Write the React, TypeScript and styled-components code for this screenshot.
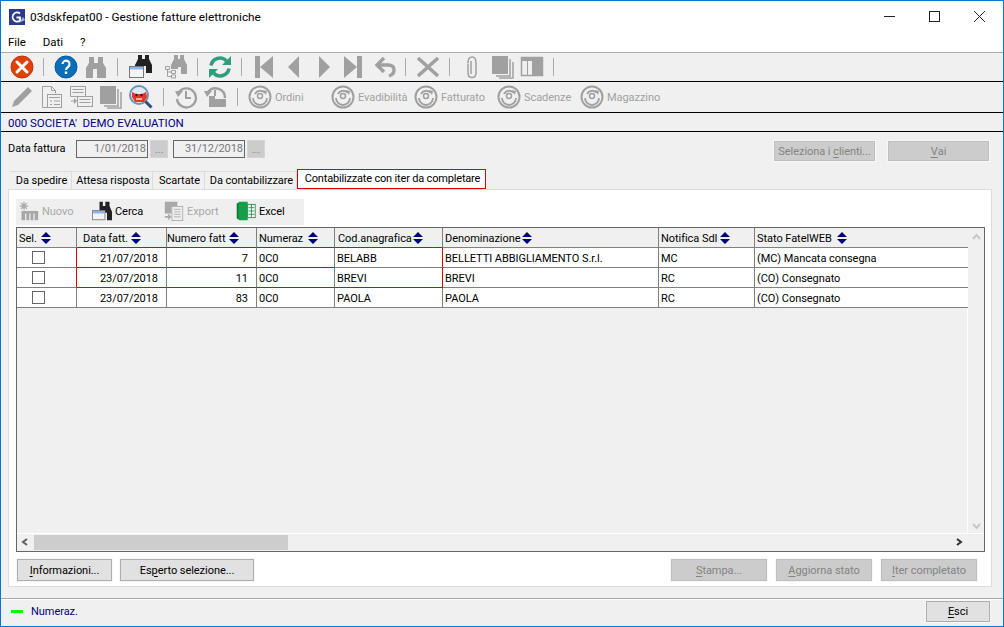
import styled, {createGlobalStyle} from "styled-components";
import type {ReactNode} from "react";

const GlobalStyle = createGlobalStyle`
  html, body {
    margin: 0;
    padding: 0;
    overflow: hidden;
  }
  * {
    box-sizing: border-box;
  }
`;

const Win = styled.div`
  width: 1004px;
  height: 627px;
  display: flex;
  flex-direction: column;
  background: #f0f0f0;
  border: 1px solid #0078d7;
  font-family: Roboto, "Liberation Sans", sans-serif;
  font-size: 11px;
  letter-spacing: -0.05px;
  color: #000;
`;

const TitleBar = styled.div`
  height: 31px;
  display: flex;
  align-items: center;
  background: #fff;
  padding: 0 1px 0 8px;
`;

const TitleText = styled.span`
  margin-left: 5px;
  flex: 1;
  font-size: 11.8px;
  letter-spacing: 0;
`;

const WinButton = styled.div`
  width: 45px;
  height: 31px;
  display: flex;
  align-items: center;
  justify-content: center;
`;

const MenuBar = styled.div`
  height: 20px;
  display: flex;
  align-items: center;
  gap: 17px;
  padding-left: 7px;
  background: #fff;
  font-size: 11.5px;
`;

const ToolBar = styled.div<{$h: number; $top?: string}>`
  height: ${props => props.$h}px;
  display: flex;
  align-items: center;
  padding-left: 9px;
  border-bottom: 1px solid #000;
  border-top: ${props => props.$top ?? "none"};
`;

const Tool = styled.div<{$gap: number}>`
  width: 24px;
  height: 24px;
  flex: none;
  margin-left: ${props => props.$gap}px;
  svg {
    display: block;
  }
`;

const Sep = styled.div<{$gap: number}>`
  width: 1px;
  height: 18px;
  flex: none;
  margin-left: ${props => props.$gap}px;
  background: #aaa;
`;

const ChartLink = styled.div`
  width: 83px;
  flex: none;
  display: flex;
  align-items: center;
  gap: 3px;
  color: #a0a0a0;
`;

const LinkGroup = styled.div`
  display: flex;
  margin-left: 10px;
`;

const Company = styled.div`
  height: 19px;
  display: flex;
  align-items: center;
  padding: 1px 0 0 7px;
  color: #000080;
  border-bottom: 1px solid #000;
  white-space: pre;
  font-size: 11.5px;
`;

const Body = styled.div`
  flex: 1;
  display: flex;
  flex-direction: column;
  padding: 0 11px 11px 7px;
`;

const FilterRow = styled.div`
  height: 37px;
  display: flex;
  align-items: flex-start;
  padding: 8px 3px 0 0;
`;

const FilterLabel = styled.span`
  width: 68px;
  line-height: 18px;
`;

const DateBox = styled.div<{$gap?: number}>`
  width: 72px;
  height: 18px;
  margin-left: ${props => props.$gap ?? 0}px;
  border: 1px solid #666;
  text-align: right;
  line-height: 16px;
  color: #777;
  padding-right: 1px;
`;

const DotsButton = styled.div`
  width: 18px;
  height: 18px;
  margin-left: 2px;
  background: #ccc;
  border: 1px solid #d4d4d4;
  color: #888;
  text-align: center;
  line-height: 18px;
`;

const Spacer = styled.div`
  flex: 1;
`;

const Button = styled.div<{$w: number; $h?: number; $disabled?: boolean; $gap?: number}>`
  width: ${props => props.$w}px;
  height: ${props => props.$h ?? 22}px;
  margin-left: ${props => props.$gap ?? 0}px;
  flex: none;
  display: flex;
  align-items: center;
  justify-content: center;
  background: ${props => props.$disabled ? "#cccccc" : "#e1e1e1"};
  border: 1px solid ${props => props.$disabled ? "#bfbfbf" : "#adadad"};
  color: ${props => props.$disabled ? "#838383" : "#000"};
  outline: 1px solid #f8f8f8;
  white-space: pre;

  u {
    text-underline-offset: 2px;
  }
`;

const FilterButton = styled(Button)`
  margin-top: 1px;
`;

const Tabs = styled.div`
  height: 20px;
  display: flex;
  align-items: flex-end;
  padding-left: 2px;
`;

const Tab = styled.div<{$w: number}>`
  width: ${props => props.$w}px;
  height: 18px;
  border: 1px solid #dcdcdc;
  border-bottom: none;
  border-left: none;
  display: flex;
  align-items: center;
  justify-content: center;
  padding-left: 2px;
  white-space: nowrap;
`;

const ActiveTab = styled.div`
  width: 189px;
  height: 20px;
  background: #fff;
  border: 1px solid #e00000;
  display: flex;
  align-items: center;
  justify-content: center;
  padding: 0 0 1px 2px;
  letter-spacing: -0.18px;
  white-space: nowrap;
`;

const Panel = styled.div`
  height: 398px;
  display: flex;
  flex-direction: column;
  background: #fff;
  border: 1px solid #dcdcdc;
  padding: 9px 7px 0 7px;
`;

const InnerBar = styled.div`
  width: 288px;
  height: 26px;
  display: flex;
  align-items: center;
  background: #efefef;
  padding: 0 0 2px 3px;
`;

const InnerItem = styled.div<{$w: number; $disabled?: boolean}>`
  width: ${props => props.$w}px;
  flex: none;
  display: flex;
  align-items: center;
  gap: 3px;
  color: ${props => props.$disabled ? "#a8a8a8" : "#000"};
`;

const Frame = styled.div`
  width: 969px;
  height: 325px;
  margin-top: 2px;
  display: flex;
  flex-direction: column;
  border: 1px solid #666;
  background: #f0f0f0;
`;

const FrameTop = styled.div`
  flex: 1;
  display: flex;
  border-bottom: 1px solid #fff;
`;

const Table = styled.div`
  width: 951px;
  display: grid;
  grid-template-columns: 60px 90px 90px 78px 108px 216px 96px 213px;
  grid-auto-rows: 20px;
  align-content: start;
  border-right: 1px solid #fff;
`;

const HeadCell = styled.div<{$pad: number; $redBottom?: boolean; $last?: boolean}>`
  display: flex;
  align-items: center;
  padding: 1px 0 0 ${props => props.$pad}px;
  background: #f0f0f0;
  border-bottom: 1px solid ${props => props.$redBottom ? "#e00000" : "#808080"};
  border-right: ${props => props.$last ? "none" : "1px solid #808080"};
  white-space: nowrap;
`;

const HeadLabel = styled.span<{$w: number}>`
  width: ${props => props.$w}px;
  flex: none;
`;

const Cell = styled.div<{$right?: boolean; $redBottom?: boolean; $redRight?: boolean; $last?: boolean}>`
  display: flex;
  align-items: center;
  justify-content: ${props => props.$right ? "flex-end" : "flex-start"};
  padding: ${props => props.$right ? "1px 8px 0 0" : "1px 0 0 2px"};
  background: #fff;
  border-bottom: 1px solid ${props => props.$redBottom ? "#e00000" : "#808080"};
  border-right: ${props => props.$last ? "none" : `1px solid ${props.$redRight ? "#e00000" : "#808080"}`};
  white-space: nowrap;
`;

const CheckCell = styled(Cell)`
  padding: 0 0 0 15px;
`;

const CheckBox = styled.div`
  width: 13px;
  height: 13px;
  background: #fff;
  border: 1px solid #666;
`;

const VScroll = styled.div`
  width: 16px;
  display: flex;
  flex-direction: column;
  justify-content: space-between;
  align-items: center;
  padding: 5px 0 3px;
`;

const HScroll = styled.div`
  height: 17px;
  display: flex;
  align-items: center;
  padding: 0 0 1px 4px;
`;

const Thumb = styled.div`
  width: 254px;
  height: 15px;
  margin-left: 4px;
  background: #cdcdcd;
`;

const ScrollEnd = styled.div`
  width: 21px;
  flex: none;
`;

const FooterEnd = styled.div`
  width: 7px;
  flex: none;
`;

const PanelFooter = styled.div`
  display: flex;
  align-items: center;
  height: 22px;
  margin-top: 7px;
  padding-left: 1px;
`;

const StatusBar = styled.div`
  height: 28px;
  display: flex;
  align-items: center;
  padding: 0 13px 2px 10px;
  border-top: 1px solid #a8a8a8;
  box-shadow: inset 0 1px 0 #fff;
`;

const GreenDash = styled.div`
  width: 12px;
  height: 3px;
  background: #00ff00;
`;

const StatusText = styled.span`
  margin-left: 8px;
  flex: 1;
  color: #000080;
`;

const G = "#a0a0a0";

const Svg = ({children, size = 24}: {children: ReactNode; size?: number}) =>
  <svg width={size} height={size} viewBox="0 0 24 24">{children}</svg>;

const Logo = () =>
  <svg width={16} height={16} viewBox="0 0 16 16">
    <rect width="16" height="16" fill="#2b3a8c"/>
    <path d="M11 4.500A4.500 4.500 0 1 0 11 11.500V8.500H7.500" fill="none" stroke="#fff" strokeWidth="1.800"/>
    <path d="M10 14l4-6 2 3z" fill="#9fb2e0"/>
  </svg>;

const CloseIcon = () => <Svg>
  <circle cx="12" cy="12" r="11" fill="#dd4208" stroke="#c0340a"/>
  <path d="M7 7l10 10M17 7L7 17" stroke="#fff" strokeWidth="3" strokeLinecap="round"/>
</Svg>;

const HelpIcon = () => <Svg>
  <circle cx="12" cy="12" r="11" fill="#0a6fb8" stroke="#075a99"/>
  <path d="M8.500 9a3.500 3.500 0 1 1 5.500 3c-1.300 1-2 1.500-2 3" fill="none" stroke="#fff" strokeWidth="2.200"/>
  <rect x="10.800" y="16.500" width="2.400" height="2.500" fill="#fff"/>
</Svg>;

const GrayBinoc = () => <Svg>
  <path fill={G} d="M5 2h5v6h4V2h5v6l3 5v10h-9v-9h-4v9H2V13l3-5z"/>
</Svg>;

const BlackBinoc = () => <Svg>
  <path fill="#222" d="M9 0h4v4h3V0h4v4l3 6v8h-6v-7h-3v3H6v-4l3-6z"/>
  <rect x="0.500" y="11.500" width="14" height="11" fill="#f4f4f4" stroke="#777"/>
  <rect x="1" y="12" width="13" height="2.500" fill="#8fb4e8"/>
</Svg>;

const TreeBinoc = () => <Svg>
  <path fill={G} d="M10 0h4v4h2V0h4v4l3 6v9h-6v-7h-3v2H7v-4l3-6z"/>
  <path fill="none" stroke={G} d="M1.500 11.500h4v3h-4zM7.500 15.500h4v3h-4zM7.500 20h4v3h-4zM3.500 14.500V21.500h4M3.500 17h4"/>
</Svg>;

const RefreshIcon = () => <Svg>
  <g fill="none" stroke="#2f9c7e" strokeWidth="3.600">
    <path d="M3 10.500A9 9 0 0 1 18.500 6"/>
    <path d="M21 13.500A9 9 0 0 1 5.500 18"/>
  </g>
  <path fill="#2f9c7e" d="M14 10h9V1zM10 14H1v9z"/>
</Svg>;

const First = () => <Svg><path fill={G} d="M2 1h5v22H2zM20 1v22L7 12z"/></Svg>;
const Prev = () => <Svg><path fill={G} d="M18 1v22L7 12z"/></Svg>;
const Next = () => <Svg><path fill={G} d="M6 1v22l11-11z"/></Svg>;
const Last = () => <Svg><path fill={G} d="M21 1h-5v22h5zM3 1v22l13-11z"/></Svg>;
const Undo = () => <Svg>
  <path fill="none" stroke={G} strokeWidth="3.400" d="M4 10h11c4 0 6 2 6 5s-2 5-5 6"/>
  <path fill="none" stroke={G} strokeWidth="3.400" d="M11 3L4 10l7 7"/>
</Svg>;
const Cross = () => <Svg><path stroke={G} strokeWidth="3.600" d="M2 3l20 18M22 3L2 21"/></Svg>;
const Clip = () => <Svg>
  <path fill="none" stroke={G} strokeWidth="1.500" d="M8 8c0-4 1.500-6 4-6s4 2 4 6v10c0 3-1.500 4.500-4 4.500S8 21 8 18V8.500M11 6v13"/>
</Svg>;
const Copies = () => <Svg>
  <rect x="1" y="1" width="16" height="18" fill={G}/>
  <path fill="none" stroke={G} strokeWidth="1.500" d="M19 4v17H5M22 7v16H8"/>
</Svg>;
const Columns = () => <Svg>
  <rect x="1.500" y="2.500" width="21" height="18" fill="none" stroke={G} strokeWidth="1.500"/>
  <rect x="12" y="2" width="11" height="19" fill={G}/>
  <rect x="1" y="2" width="22" height="4" fill={G}/>
  <path stroke={G} d="M7.500 6v14"/>
</Svg>;
const Pencil = () => <Svg>
  <path fill={G} d="M18 2l4 4L8 20l-6 2 2-6z"/>
</Svg>;
const DocForm = () => <Svg>
  <path fill="none" stroke={G} d="M3.500 1.500h9l4 4v3M3.500 1.500v21h5M12.500 1.500v4h4"/>
  <rect x="8.500" y="9.500" width="14" height="13" fill="#f0f0f0" stroke={G}/>
  <path stroke={G} d="M10 12.500h11M11 16h2M15 16h6M11 19.500h2M15 19.500h6"/>
</Svg>;
const DocSwap = () => <Svg>
  <path fill="none" stroke={G} d="M1.500 1.500h15v10h-15zM3.500 4.500h11M3.500 7.500h11"/>
  <rect x="8.500" y="11.500" width="15" height="10" fill="#f0f0f0" stroke={G}/>
  <path stroke={G} d="M10.500 14.500h11M10.500 17.500h11M2 16h5"/>
  <path fill={G} d="M5 13l3 3-3 3z"/>
</Svg>;
const Lens = () => <Svg>
  <circle cx="10" cy="10" r="9" fill="#dfe8f2" stroke="#6e93b8" strokeWidth="2"/>
  <path fill="#e23a1c" d="M3 7l4 2h6l4-2 1 5-3 5H6l-3-5z"/>
  <circle cx="7.500" cy="10" r="1.200" fill="#222"/>
  <circle cx="12.500" cy="10" r="1.200" fill="#222"/>
  <path d="M7 14h6" stroke="#fff" strokeWidth="1.300"/>
  <path d="M16.500 16.500l6 6" stroke="#2b4f7a" strokeWidth="3"/>
</Svg>;
const ClockBack = () => <Svg>
  <path fill="none" stroke={G} strokeWidth="2.400" d="M5 7a9.500 9.500 0 1 1-2 7"/>
  <path fill={G} d="M1 6h8l-5 6z"/>
  <path fill="none" stroke={G} strokeWidth="2" d="M12 6v7h5"/>
</Svg>;
const ClockFile = () => <Svg>
  <path fill="none" stroke={G} strokeWidth="2.400" d="M5 7a9.500 9.500 0 0 1 17 6"/>
  <path fill={G} d="M1 6h8l-5 6z"/>
  <path fill="none" stroke={G} strokeWidth="2" d="M12 5v6"/>
  <path fill={G} d="M6 11h6v3h11v8H6z"/>
</Svg>;
const Swirl = () => <Svg>
  <circle cx="12" cy="12" r="10.500" fill="none" stroke={G} strokeWidth="2"/>
  <path fill="none" stroke={G} strokeWidth="1.800" d="M5 13a7 7 0 0 0 14 0M7 9a6 6 0 0 1 10-1"/>
  <circle cx="12" cy="11" r="2.500" fill="none" stroke={G} strokeWidth="1.500"/>
  <path fill={G} d="M15 5l4 1-1 4z"/>
</Svg>;

const NuovoIcon = () => <Svg size={20}>
  <path stroke="#a8a8a8" strokeWidth="1.500" d="M6 1v10M1 6h10M2.500 2.500l7 7M9.500 2.500l-7 7"/>
  <rect x="3" y="12" width="20" height="11" fill="#a8a8a8"/>
  <path stroke="#efefef" strokeWidth="1.500" d="M8 15v8M13 15v8M18 15v8"/>
</Svg>;
const CercaIcon = () => <Svg size={20}>
  <path fill="#222" d="M9 1h4v5h3V1h5v5l3 7v10h-6v-9h-3.500v1H9V9z"/>
  <rect x="0.500" y="11.500" width="15" height="11" fill="#f4f4f4" stroke="#777"/>
  <rect x="1" y="12" width="14" height="3" fill="#8fb4e8"/>
</Svg>;
const ExportIcon = () => <Svg size={20}>
  <path fill="#a8a8a8" d="M1 1h15v5H9v9H1z"/>
  <rect x="9.500" y="6.500" width="13" height="17" fill="#efefef" stroke="#a8a8a8"/>
  <path stroke="#a8a8a8" d="M12 10h8M12 13h8M12 16h8M12 19h8"/>
  <path fill="#a8a8a8" d="M1 18h4v-3l4 4-4 4v-3H1z"/>
</Svg>;
const ExcelIcon = () => <Svg size={20}>
  <path fill="#14a04a" d="M1 3l3-2h10v22H4l-3-2z"/>
  <path fill="#0c7a37" d="M1 3h2v18H1z"/>
  <rect x="14" y="4" width="9" height="16" fill="#fff" stroke="#118a43"/>
  <path stroke="#118a43" d="M15 8h7M15 12h7M15 16h7M18.500 4v16"/>
</Svg>;

const SortArrows = () =>
  <svg width={10} height={12} viewBox="0 0 10 12" style={{flex: "none"}}>
    <path fill="#000080" d="M5 0l5 5H0zM0 7h10l-5 5z"/>
  </svg>;

const Chevron = ({d, color}: {d: string; color: string}) =>
  <svg width={9} height={8} viewBox="0 0 9 8">
    <path fill="none" stroke={color} strokeWidth="2" d={d}/>
  </svg>;

const topTools: [number, ReactNode | null][] = [
  [0, <CloseIcon/>], [9, null], [10, <HelpIcon/>], [6, <GrayBinoc/>], [9, null],
  [11, <BlackBinoc/>], [11, <TreeBinoc/>], [9, null], [10, <RefreshIcon/>], [9, null],
  [11, <First/>], [4, <Prev/>], [8, <Next/>], [4, <Last/>], [8, <Undo/>], [8, null],
  [10, <Cross/>], [9, null], [10, <Clip/>], [7, <Copies/>], [5, <Columns/>], [9, null],
];

const secondTools: [number, ReactNode | null][] = [
  [0, <Pencil/>], [5, <DocForm/>], [6, <DocSwap/>], [6, <Copies/>], [6, <Lens/>], [10, null],
  [10, <ClockBack/>], [5, <ClockFile/>], [10, null],
];

// label: space kept before the sort arrows, so they land where the reference has them
const columns = [
  {title: "Sel.", pad: 2, label: 22},
  {title: "Data fatt.", pad: 6, label: 48},
  {title: "Numero fatt", pad: 0, label: 62},
  {title: "Numeraz", pad: 2, label: 49},
  {title: "Cod.anagrafica", pad: 3, label: 75},
  {title: "Denominazione", pad: 2, label: 77},
  {title: "Notifica SdI", pad: 2, label: 59},
  {title: "Stato FatelWEB", pad: 2, label: 80},
];

const rows = [
  ["21/07/2018", "7", "0C0", "BELABB", "BELLETTI ABBIGLIAMENTO S.r.l.", "MC", "(MC) Mancata consegna"],
  ["23/07/2018", "11", "0C0", "BREVI", "BREVI", "RC", "(CO) Consegnato"],
  ["23/07/2018", "83", "0C0", "PAOLA", "PAOLA", "RC", "(CO) Consegnato"],
];

function renderTools(tools: [number, ReactNode | null][]) {
  return tools.map(([gap, icon], i) =>
    icon ? <Tool key={i} $gap={gap}>{icon}</Tool> : <Sep key={i} $gap={gap}/>
  );
}

export default function App() {
  return <>
    <GlobalStyle/>
    <Win>
      <TitleBar>
        <Logo/>
        <TitleText>03dskfepat00 - Gestione fatture elettroniche</TitleText>
        <WinButton>
          <svg width={11} height={11}><path d="M0 5.500h11" stroke="#222"/></svg>
        </WinButton>
        <WinButton>
          <svg width={11} height={11}><rect x=".5" y=".5" width="10" height="10" fill="none" stroke="#222"/></svg>
        </WinButton>
        <WinButton>
          <svg width={11} height={11}><path d="M0 0l11 11M11 0L0 11" stroke="#222"/></svg>
        </WinButton>
      </TitleBar>
      <MenuBar>
        <span>File</span>
        <span>Dati</span>
        <span>?</span>
      </MenuBar>
      <ToolBar $h={30} $top="1px solid #a8a8a8">{renderTools(topTools)}</ToolBar>
      <ToolBar $h={31}>
        {renderTools(secondTools)}
        <LinkGroup>
          {["Ordini", "Evadibilità", "Fatturato", "Scadenze", "Magazzino"].map(label =>
            <ChartLink key={label}><Tool $gap={0}><Swirl/></Tool>{label}</ChartLink>
          )}
        </LinkGroup>
      </ToolBar>
      <Company>000 SOCIETA'  DEMO EVALUATION</Company>
      <Body>
        <FilterRow>
          <FilterLabel>Data fattura</FilterLabel>
          <DateBox>1/01/2018</DateBox>
          <DotsButton>...</DotsButton>
          <DateBox $gap={5}>31/12/2018</DateBox>
          <DotsButton>...</DotsButton>
          <Spacer/>
          <FilterButton $w={101} $h={20} $disabled>Seleziona i <u>c</u>lienti...</FilterButton>
          <FilterButton $w={101} $h={20} $gap={13} $disabled><u>V</u>ai</FilterButton>
        </FilterRow>
        <Tabs>
          <Tab $w={62}>Da spedire</Tab>
          <Tab $w={81}>Attesa risposta</Tab>
          <Tab $w={52}>Scartate</Tab>
          <Tab $w={92}>Da contabilizzare</Tab>
          <ActiveTab>Contabilizzate con iter da completare</ActiveTab>
        </Tabs>
        <Panel>
          <InnerBar>
            <InnerItem $w={73} $disabled><NuovoIcon/>Nuovo</InnerItem>
            <InnerItem $w={72}><CercaIcon/>Cerca</InnerItem>
            <InnerItem $w={72} $disabled><ExportIcon/>Export</InnerItem>
            <InnerItem $w={60}><ExcelIcon/>Excel</InnerItem>
          </InnerBar>
          <Frame>
            <FrameTop>
              <Table>
                {columns.map((col, i) =>
                  <HeadCell key={col.title} $pad={col.pad} $redBottom={i >= 1 && i <= 4} $last={i === 7}>
                    <HeadLabel $w={col.label}>{col.title}</HeadLabel>
                    <SortArrows/>
                  </HeadCell>
                )}
                {rows.map((row, r) => {
                  const boxed = r < 2;
                  return [
                    <CheckCell key={`${r}-c`} $redRight={boxed}><CheckBox/></CheckCell>,
                    ...row.map((value, c) =>
                      <Cell
                        key={`${r}-${c}`}
                        $right={c < 2}
                        $last={c === 6}
                        $redRight={boxed && c === 3}
                        $redBottom={c <= 2 ? boxed : c === 3 && r === 1}
                      >
                        {value}
                      </Cell>
                    ),
                  ];
                })}
              </Table>
              <VScroll>
                <Chevron d="M1 6l3.500-4L8 6" color="#c8c8c8"/>
                <Chevron d="M1 2l3.500 4L8 2" color="#c8c8c8"/>
              </VScroll>
            </FrameTop>
            <HScroll>
              <Chevron d="M6 1L2 4l4 3" color="#606060"/>
              <Thumb/>
              <Spacer/>
              <Chevron d="M3 1l4 3-4 3" color="#303030"/>
              <ScrollEnd/>
            </HScroll>
          </Frame>
          <PanelFooter>
            <Button $w={95}><u>I</u>nformazioni...</Button>
            <Button $w={134} $gap={8}>Es<u>p</u>erto selezione...</Button>
            <Spacer/>
            <Button $w={96} $disabled><u>S</u>tampa...</Button>
            <Button $w={96} $gap={9} $disabled><u>A</u>ggiorna stato</Button>
            <Button $w={96} $gap={9} $disabled><u>I</u>ter completato</Button>
            <FooterEnd/>
          </PanelFooter>
        </Panel>
      </Body>
      <StatusBar>
        <GreenDash/>
        <StatusText>Numeraz.</StatusText>
        <Button $w={64} $h={21}><u>E</u>sci</Button>
      </StatusBar>
    </Win>
  </>;
}
